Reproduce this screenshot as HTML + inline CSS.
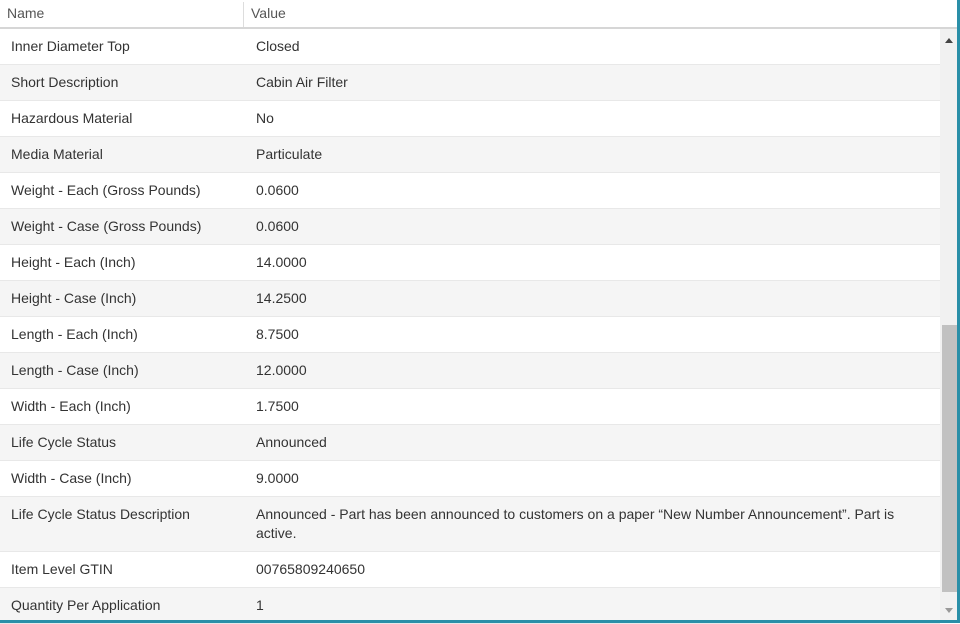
<!DOCTYPE html>
<html><head><style>
body{margin:0;width:960px;height:623px;overflow:hidden;background:#fff;font-family:"Liberation Sans",sans-serif;font-size:14px;color:#333;position:relative}
.hdr{position:absolute;left:0;top:0;width:957px;height:27px;border-bottom:2px solid #d6d6d6;background:#fff}
.hdr span{position:absolute;top:5px;color:#555}
.hdr .div{position:absolute;left:243px;top:2px;width:1px;height:25px;background:#ddd}
.rows{position:absolute;left:0;top:29px;width:940px}
.r{position:relative;height:35px;border-bottom:1px solid #e8e8e8}
.r:nth-child(even){background:#f5f5f5}
.r .n{position:absolute;left:11px;top:8px;line-height:19px}
.r .v{position:absolute;left:256px;top:8px;right:20px;line-height:19px}
.sb{position:absolute;left:940px;top:29px;width:17px;height:591px;background:#f1f1f1}
.th{position:absolute;left:942px;top:325px;width:15px;height:267px;background:#c1c1c1}
.rb{position:absolute;left:957px;top:0;width:3px;height:623px;background:#2a8fa8}
.bb{position:absolute;left:0;top:620px;width:960px;height:3px;background:#2a8fa8}
</style></head><body>
<div class="hdr"><span style="left:7px">Name</span><div class="div"></div><span style="left:251px">Value</span></div>
<div class="rows">
<div class="r"><span class="n">Inner Diameter Top</span><span class="v">Closed</span></div>
<div class="r"><span class="n">Short Description</span><span class="v">Cabin Air Filter</span></div>
<div class="r"><span class="n">Hazardous Material</span><span class="v">No</span></div>
<div class="r"><span class="n">Media Material</span><span class="v">Particulate</span></div>
<div class="r"><span class="n">Weight - Each (Gross Pounds)</span><span class="v">0.0600</span></div>
<div class="r"><span class="n">Weight - Case (Gross Pounds)</span><span class="v">0.0600</span></div>
<div class="r"><span class="n">Height - Each (Inch)</span><span class="v">14.0000</span></div>
<div class="r"><span class="n">Height - Case (Inch)</span><span class="v">14.2500</span></div>
<div class="r"><span class="n">Length - Each (Inch)</span><span class="v">8.7500</span></div>
<div class="r"><span class="n">Length - Case (Inch)</span><span class="v">12.0000</span></div>
<div class="r"><span class="n">Width - Each (Inch)</span><span class="v">1.7500</span></div>
<div class="r"><span class="n">Life Cycle Status</span><span class="v">Announced</span></div>
<div class="r"><span class="n">Width - Case (Inch)</span><span class="v">9.0000</span></div>
<div class="r" style="height:54px"><span class="n">Life Cycle Status Description</span><span class="v">Announced - Part has been announced to customers on a paper “New Number Announcement”. Part is active.</span></div>
<div class="r"><span class="n">Item Level GTIN</span><span class="v">00765809240650</span></div>
<div class="r"><span class="n">Quantity Per Application</span><span class="v">1</span></div>
</div>
<div class="sb"></div><div class="th"></div>
<svg style="position:absolute;left:944px;top:37px" width="10" height="8"><path d="M1 6 L5 1 L9 6 Z" fill="#444"/></svg>
<svg style="position:absolute;left:944px;top:606px" width="10" height="8"><path d="M1 2 L5 7 L9 2 Z" fill="#999"/></svg>
<div class="rb"></div><div class="bb"></div>
</body></html>
